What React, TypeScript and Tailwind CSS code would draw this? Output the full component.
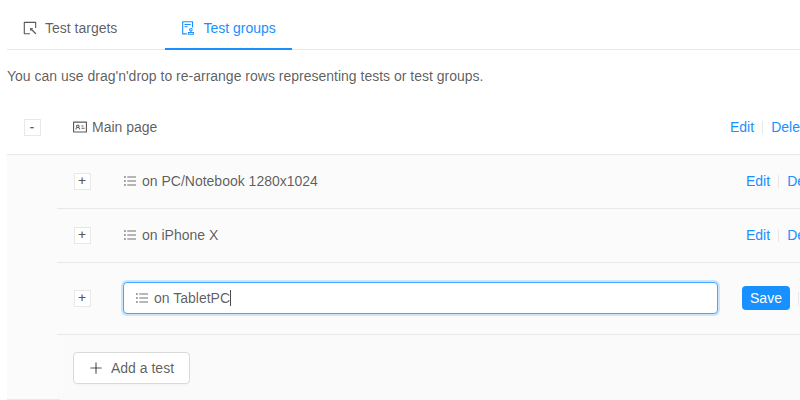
import React from "react";
import {
  AiOutlineAudit,
  AiOutlineIdcard,
  AiOutlinePlus,
  AiOutlineSelect,
} from "react-icons/ai";

function ListIcon() {
  return (
    <svg width="14" height="14" viewBox="0 0 14 14" fill="currentColor" className="shrink-0">
      <path
        opacity="0.85"
        d="M4.3 2.4H13v1.2H4.3zM4.3 6.4H13v1.2H4.3zM4.3 10.4H13v1.2H4.3zM1.1 2.2h1.6v1.6H1.1zM1.1 6.2h1.6v1.6H1.1zM1.1 10.2h1.6v1.6H1.1z"
      />
    </svg>
  );
}

function Expander({ open = false }: { open?: boolean }) {
  return (
    <button className="flex h-[17px] w-[17px] shrink-0 items-start justify-center border border-[#e8e8e8] bg-white text-[13px] leading-[13px] text-[#595959] [-webkit-text-stroke:0.2px]">
      <span className="-ml-px">{open ? "-" : "+"}</span>
    </button>
  );
}

function Divider() {
  return <span className="mx-2 h-[13px] w-px shrink-0 bg-[#e8e8e8]" />;
}

function Actions() {
  return (
    <div className="flex shrink-0 items-center text-[#1890ff]">
      <a>Edit</a>
      <Divider />
      <a>Delete</a>
    </div>
  );
}

function TestRow({ name }: { name: string }) {
  return (
    <div className="flex h-[54px] items-center border-b border-[#e8e8e8] pl-[17px]">
      <Expander />
      <div className="ml-8 flex w-[623px] shrink-0 items-center gap-[5px]">
        <span className="-mt-px">
          <ListIcon />
        </span>
        <span>{name}</span>
      </div>
      <Actions />
    </div>
  );
}

export default function App() {
  return (
    <div className="h-[400px] w-[800px] overflow-hidden bg-white pl-[7px] pt-[5px] font-['Liberation_Sans',Arial,sans-serif] text-sm leading-[21px] text-black/65">
      <nav className="flex h-[45px] gap-8 border-b border-[#e8e8e8]">
        <div className="flex h-[45px] w-[126px] items-center gap-2 px-4 pt-px">
          <AiOutlineSelect size={16} className="-mx-px shrink-0" />
          <span className="whitespace-nowrap">Test targets</span>
        </div>
        <div className="flex h-[45px] w-[127px] items-center gap-[8.5px] border-b-2 border-[#1890ff] px-4 pt-[3px] text-[#1890ff]">
          <AiOutlineAudit size={16} className="-mx-px shrink-0" />
          <span className="whitespace-nowrap">Test groups</span>
        </div>
      </nav>

      <p className="mt-4 h-[35px]">
        You can use drag'n'drop to re-arrange rows representing tests or test groups.
      </p>

      <div className="flex h-[54px] items-center border-b border-[#e8e8e8] pl-[17px]">
        <Expander open />
        <div className="ml-8 flex w-[657px] shrink-0 items-center gap-[5px]">
          <AiOutlineIdcard size={16} className="-mx-px -mt-px shrink-0" />
          <span>Main page</span>
        </div>
        <Actions />
      </div>

      <div className="flex h-[245px] bg-[#fbfbfb]">
        <div className="w-[50px] shrink-0 border-b border-[#e8e8e8]" />
        <div className="min-w-0 flex-1 overflow-hidden">
          <TestRow name="on PC/Notebook 1280x1024" />
          <TestRow name="on iPhone X" />
          <div className="flex h-[72px] items-center border-b border-[#e8e8e8] pb-px pl-[17px]">
            <Expander />
            <div className="ml-8 flex h-8 w-[595px] shrink-0 items-center gap-[5px] rounded border border-[#40a9ff] bg-white pl-[11px] shadow-[0_0_0_2px_rgba(24,144,255,0.2)]">
              <ListIcon />
              <span className="flex items-center">
                on TabletPC
                <span className="h-4 w-px bg-black/70" />
              </span>
            </div>
            <button className="ml-6 h-6 w-12 shrink-0 rounded bg-[#1890ff] text-white">
              Save
            </button>
            <Divider />
          </div>
          <div className="flex h-[65px] items-end bg-[#fafafa]">
            <div className="h-px w-[3px] bg-[#e8e8e8]" />
            <button className="mb-4 ml-[13px] flex h-8 w-[117px] items-center gap-2 rounded border border-[#d9d9d9] bg-white pl-[15px] shadow-[0_2px_0_rgba(0,0,0,0.015)]">
              <AiOutlinePlus size={16} className="-mx-px shrink-0" />
              <span>Add a test</span>
            </button>
          </div>
        </div>
      </div>
    </div>
  );
}
